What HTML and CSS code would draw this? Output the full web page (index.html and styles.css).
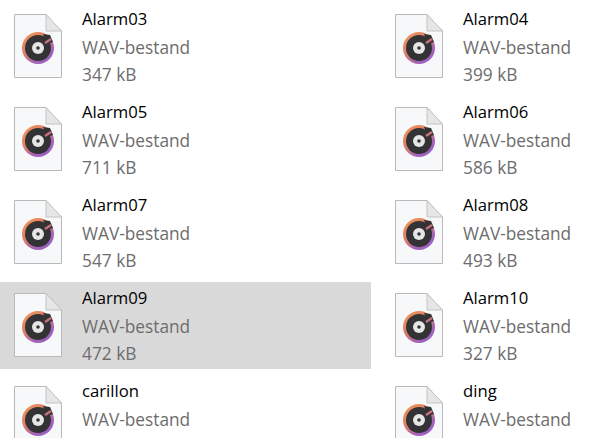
FILE: index.html
```html
<!DOCTYPE html>
<html lang="nl">
<head>
<meta charset="utf-8">
<title>Alarm</title>
<link rel="stylesheet" href="styles.css">
</head>
<body>
<svg class="defs" width="0" height="0" aria-hidden="true">
<defs>
<linearGradient id="ring" x1="0.15" y1="0.1" x2="0.8" y2="0.95">
<stop offset="0" stop-color="#ee9058"/>
<stop offset="0.45" stop-color="#d87c70"/>
<stop offset="0.75" stop-color="#a863b8"/>
<stop offset="1" stop-color="#9660c4"/>
</linearGradient>
<symbol id="wav" viewBox="0 0 48 64">
<path d="M.5.5H32L47.5 17V63.5H.5Z" fill="#f7f8fa" stroke="#b9b9b9"/>
<path d="M32 .5V17H47.5Z" fill="#e6e6e6" stroke="#c4c4c4"/>
<circle cx="24" cy="34" r="16" fill="url(#ring)"/>
<circle cx="24" cy="34" r="13" fill="#333335"/>
<path d="M29 20L36 21L39 28L33 30Z" fill="#333335"/>
<path d="M31 29L37 25" stroke="#c9707a" stroke-width="2.5"/>
<circle cx="24" cy="34" r="6" fill="#e6e6e6"/>
<circle cx="24" cy="34" r="1.8" fill="#333335"/>
</symbol>
</defs>
</svg>
<main class="grid">
<div class="item"><svg class="icon"><use href="#wav"/></svg><div class="info"><div class="name">Alarm03</div><div class="meta">WAV-bestand</div><div class="meta">347 kB</div></div></div>
<div class="item"><svg class="icon"><use href="#wav"/></svg><div class="info"><div class="name">Alarm04</div><div class="meta">WAV-bestand</div><div class="meta">399 kB</div></div></div>
<div class="item"><svg class="icon"><use href="#wav"/></svg><div class="info"><div class="name">Alarm05</div><div class="meta">WAV-bestand</div><div class="meta">711 kB</div></div></div>
<div class="item"><svg class="icon"><use href="#wav"/></svg><div class="info"><div class="name">Alarm06</div><div class="meta">WAV-bestand</div><div class="meta">586 kB</div></div></div>
<div class="item"><svg class="icon"><use href="#wav"/></svg><div class="info"><div class="name">Alarm07</div><div class="meta">WAV-bestand</div><div class="meta">547 kB</div></div></div>
<div class="item"><svg class="icon"><use href="#wav"/></svg><div class="info"><div class="name">Alarm08</div><div class="meta">WAV-bestand</div><div class="meta">493 kB</div></div></div>
<div class="item selected"><svg class="icon"><use href="#wav"/></svg><div class="info"><div class="name">Alarm09</div><div class="meta">WAV-bestand</div><div class="meta">472 kB</div></div></div>
<div class="item"><svg class="icon"><use href="#wav"/></svg><div class="info"><div class="name">Alarm10</div><div class="meta">WAV-bestand</div><div class="meta">327 kB</div></div></div>
<div class="item"><svg class="icon"><use href="#wav"/></svg><div class="info"><div class="name">carillon</div><div class="meta">WAV-bestand</div></div></div>
<div class="item"><svg class="icon"><use href="#wav"/></svg><div class="info"><div class="name">ding</div><div class="meta">WAV-bestand</div></div></div>
</main>
</body>
</html>
```
FILE: styles.css
```css
html, body {
  margin: 0;
  height: 438px;
  overflow: hidden;
  background: #fff;
}
.defs {
  display: block;
  height: 0;
}
.grid {
  display: grid;
  grid-template-columns: 371px 230px;
  grid-auto-rows: 87px;
  column-gap: 10px;
  row-gap: 6px;
  height: 435px;
  overflow: hidden;
  padding-top: 3px;
  font-family: "Open Sans", "Noto Sans", sans-serif;
  font-size: 16.7px;
  line-height: 27.5px;
}
.item {
  display: flex;
  align-items: flex-start;
  padding: 11px 0 0 14px;
  box-sizing: border-box;
  column-gap: 20px;
}
.selected {
  background: #d9d9d9;
}
.icon {
  width: 48px;
  height: 64px;
  flex: none;
}
.info {
  margin-top: -9px;
}
.name {
  color: #000;
  margin-bottom: 1px;
}
.meta {
  color: #6d6d6d;
  font-size: 17.3px;
}
```
